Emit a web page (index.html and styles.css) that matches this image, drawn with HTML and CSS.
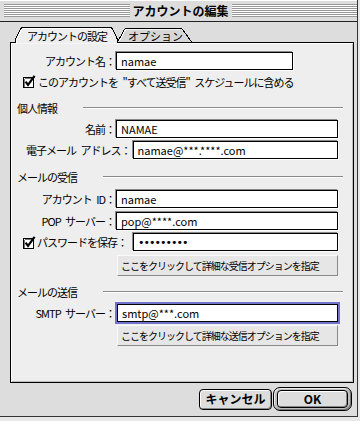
FILE: index.html
```html
<!DOCTYPE html>
<html lang="ja">
<head>
<meta charset="utf-8">
<title>アカウントの編集</title>
<link rel="stylesheet" href="styles.css">
</head>
<body>
<div class="window">
  <div class="titlebar">
    <div class="stripes"></div>
    <div class="title">アカウントの編集</div>
    <div class="stripes"></div>
  </div>

  <div class="tabs">
    <svg class="tab-shapes" width="200" height="18" viewBox="0 26 200 18" aria-hidden="true">
      <path d="M118 42 L124.5 29.5 Q125.5 28.5 127.5 28.5 H180.5 Q182 28.5 183 30 L191 42 Z" fill="#d6d6d6"/>
      <path d="M119.5 41 L125.5 29.5 H128" fill="none" stroke="#fff" shape-rendering="crispEdges"/>
      <path d="M126.5 29.5 H180" fill="none" stroke="#f4f4f4" shape-rendering="crispEdges"/>
      <path d="M117.5 42 L124.5 29.5 Q125.5 28.5 127.5 28.5 H180.5 Q182 28.5 183 30 L191.5 42" fill="none" stroke="#000" shape-rendering="crispEdges"/>
      <path d="M16 43.5 V40 L21 29 Q22 28 24 28 H109 Q111 28 112 29 L117 40 V43.5 Z" fill="#eeeeee"/>
      <path d="M16.5 43.5 V40 L21.5 29.5 Q22.5 28.5 24 28.5 H109" fill="none" stroke="#fff" shape-rendering="crispEdges"/>
      <path d="M15.5 42 V39.5 L20.5 29 Q21.5 27.5 23.5 27.5 H109.5 Q111.5 27.5 112.5 29 L117.5 39.5 V42.5" fill="none" stroke="#000" shape-rendering="crispEdges"/>
    </svg>
    <span class="tab tab-active">アカウントの設定</span>
    <span class="tab tab-inactive">オプション</span>
  </div>

  <div class="panel">
    <div class="row r-account">
      <span class="lbl">アカウント名：</span>
      <input class="field field-short" type="text" value="namae">
    </div>

    <div class="row r-check">
      <svg class="check" width="13" height="13" viewBox="0 0 13 13" aria-hidden="true">
        <rect x="0.5" y="2.5" width="10" height="10" fill="#fff" stroke="#000" shape-rendering="crispEdges"/>
        <path d="M1.5 3.5 H9.5 M1.5 3.5 V11.5" stroke="#777" fill="none" shape-rendering="crispEdges"/>
        <path d="M2.6 6.6 L5 9.8 L11.6 0.8" stroke="#000" stroke-width="2.2" fill="none"/>
      </svg>
      <span class="txt">このアカウントを&#8194;"すべて送受信"&#8194;スケジュールに含める</span>
    </div>

    <div class="group g1"><span class="gtxt">個人情報</span><span class="rule"></span></div>

    <div class="row r-name">
      <span class="lbl">名前：</span>
      <input class="field" type="text" value="NAMAE">
    </div>

    <div class="row r-email">
      <span class="lbl">電子メール&#8194;アドレス：</span>
      <input class="field" type="text" value="namae@***.****.com">
    </div>

    <div class="group g2"><span class="gtxt">メールの受信</span><span class="rule"></span></div>

    <div class="row r-id">
      <span class="lbl">アカウント&#8194;ID：</span>
      <input class="field" type="text" value="namae">
    </div>

    <div class="row r-pop">
      <span class="lbl">POP&#8194;サーバー：</span>
      <input class="field" type="text" value="pop@****.com">
    </div>

    <div class="row r-pwd">
      <svg class="check" width="13" height="13" viewBox="0 0 13 13" aria-hidden="true">
        <rect x="0.5" y="2.5" width="10" height="10" fill="#fff" stroke="#000" shape-rendering="crispEdges"/>
        <path d="M1.5 3.5 H9.5 M1.5 3.5 V11.5" stroke="#777" fill="none" shape-rendering="crispEdges"/>
        <path d="M2.6 6.6 L5 9.8 L11.6 0.8" stroke="#000" stroke-width="2.2" fill="none"/>
      </svg>
      <span class="lbl">パスワードを保存：</span>
      <input class="field pw" type="password" value="abcdefghi">
    </div>

    <div class="row-btn r-btn1">
      <button class="bevel" type="button">ここをクリックして詳細な受信オプションを指定</button>
    </div>

    <div class="group g3"><span class="gtxt">メールの送信</span><span class="rule"></span></div>

    <div class="row r-smtp">
      <span class="lbl">SMTP&#8194;サーバー：</span>
      <input class="field focused" type="text" value="smtp@***.com">
    </div>

    <div class="row-btn r-btn2">
      <button class="bevel" type="button">ここをクリックして詳細な送信オプションを指定</button>
    </div>
  </div>

  <div class="buttons">
    <button class="btn btn-cancel" type="button">キャンセル</button>
    <div class="ring"><button class="btn btn-ok" type="button">OK</button></div>
  </div>
</div>
</body>
</html>
```

FILE: styles.css
```css
html, body {
  margin: 0;
  padding: 0;
}

body {
  width: 360px;
  height: 421px;
  overflow: hidden;
  background: #e8e8e8;
  color: #000;
  font-family: "Noto Sans CJK JP", "Noto Sans", sans-serif;
}

.window {
  width: 357px;
  height: 416px;
  background: #dddddd;
  border-right: 1px solid #333;
  border-bottom: 1px solid #333;
  display: flex;
  flex-direction: column;
}

/* Title bar */
.titlebar {
  height: 21px;
  border-bottom: 1px solid #222;
  display: flex;
  align-items: center;
  padding-left: 4px;
  box-shadow: inset 0 1px 0 #fff;
}

.stripes {
  flex: 1 1 0;
  height: 13px;
  background: repeating-linear-gradient(to bottom, #999 0, #999 1px, #fff 1px, #fff 2px);
}

.title {
  margin: 0 3px;
  font-size: 12px;
  font-weight: 700;
  line-height: 14px;
  white-space: nowrap;
}

/* Tabs */
.tabs {
  position: relative;
  height: 16px;
  margin-top: 4px;
  padding-left: 27px;
  display: flex;
}

.tab-shapes {
  position: absolute;
  left: 0;
  top: 0;
  z-index: 1;
  overflow: visible;
}

.tab {
  position: relative;
  z-index: 2;
  padding-top: 4px;
  font-size: 11px;
  letter-spacing: -1px;
  line-height: 12px;
  white-space: nowrap;
}

.tab-active {
  margin-right: 21px;
}

.tab-inactive {
  letter-spacing: 0;
}

/* Panel */
.panel {
  margin-left: 10px;
  width: 344px;
  height: 341px;
  box-sizing: border-box;
  border: 1px solid #000;
  background: #eeeeee;
  box-shadow: inset 1px 1px 0 #fff, inset -1px -1px 0 #bdbdbd;
  padding-top: 9px;
  display: flex;
  flex-direction: column;
}

.row {
  display: flex;
  align-items: center;
  height: 18px;
  padding-right: 15px;
  flex: none;
}

.lbl {
  flex: none;
  width: 104px;
  text-align: right;
  white-space: nowrap;
  font-size: 11px;
  letter-spacing: -1px;
  line-height: 12px;
}

.field {
  flex: 1 1 0;
  min-width: 0;
  height: 18px;
  box-sizing: border-box;
  margin: 0 0 0 1px;
  padding: 0 0 0 4px;
  border: 1px solid #000;
  border-radius: 0;
  background: #fff;
  color: #000;
  font-family: "Noto Sans CJK JP", "Noto Sans", sans-serif;
  font-size: 11px;
  box-shadow: -1px -1px 0 #8a8a8a, 1px 1px 0 #fff;
  outline: none;
}

.field-short {
  flex: none;
  width: 177px;
}

.pw {
  font-family: "DejaVu Sans", sans-serif;
  letter-spacing: -1px;
}

.focused {
  box-shadow: 0 0 0 2px #7373cc;
}

.check {
  flex: none;
  display: block;
  overflow: visible;
}

.txt {
  font-size: 11px;
  letter-spacing: -1px;
  line-height: 12px;
  white-space: nowrap;
}

.r-check {
  height: 13px;
  margin-top: 5px;
  padding-left: 12px;
  align-items: flex-end;
}

.r-check .check {
  margin-right: 2px;
}

.group {
  flex: none;
  display: flex;
  align-items: center;
  height: 12px;
  padding: 0 10px 0 6px;
  font-size: 11px;
  letter-spacing: -1px;
  line-height: 12px;
}

.gtxt {
  white-space: nowrap;
}

.rule {
  flex: 1 1 0;
  margin-left: 26px;
  height: 0;
  border-top: 1px solid #8a8a8a;
  border-bottom: 1px solid #fff;
}

.g1 { margin-top: 14px; }
.r-name { margin-top: 6px; }
.r-email { margin-top: 3px; padding-left: 15px; }
.r-email .lbl { width: auto; }
.r-email .field { margin-left: 2px; }
.g2 { margin-top: 12px; }
.r-id { margin-top: 7px; }
.r-pop { margin-top: 4px; }
.r-pwd { margin-top: 3px; padding-left: 12px; }
.r-pwd .check { margin-right: 1px; }
.r-pwd .lbl { width: auto; }
.r-pwd .field { margin-left: 6px; }
.g3 { margin-top: 10px; }
.r-smtp { margin-top: 6px; }
.r-smtp .field { margin-left: 2px; }

.row-btn {
  flex: none;
  display: flex;
  height: 21px;
  padding-left: 106px;
  padding-right: 15px;
}

.r-btn1 { margin-top: 4px; }
.r-btn2 { margin-top: 3px; }

.bevel {
  flex: 1 1 0;
  height: 21px;
  margin: 0;
  padding: 0 0 0 3px;
  box-sizing: border-box;
  border: 1px solid;
  border-color: #fafafa #8a8a8a #8a8a8a #fafafa;
  border-radius: 0;
  background: #e6e6e6;
  color: #000;
  text-align: left;
  font-family: "Noto Sans CJK JP", "Noto Sans", sans-serif;
  font-size: 10px;
  letter-spacing: -1px;
  line-height: 12px;
  white-space: nowrap;
}

/* Dialog buttons */
.buttons {
  display: flex;
  justify-content: flex-end;
  align-items: center;
  gap: 1px;
  margin-top: 4px;
  padding-right: 5px;
}

.btn {
  margin: 0;
  padding: 0;
  box-sizing: border-box;
  border: 1px solid #000;
  border-radius: 4px;
  background: #dddddd;
  color: #000;
  font-family: "Noto Sans CJK JP", "Noto Sans", sans-serif;
  font-size: 12px;
  font-weight: 700;
  line-height: 14px;
  box-shadow: inset 1px 1px 0 #fff, inset -1px -1px 0 #888;
}

.btn-cancel {
  width: 73px;
  height: 21px;
}

.ring {
  display: flex;
  padding: 2px 3px;
  border: 1px solid #000;
  border-radius: 7px;
  background: #bdbdbd;
  box-shadow: inset 1px 1px 0 #eee, inset -1px -1px 0 #777;
}

.btn-ok {
  width: 71px;
  height: 18px;
}
```
